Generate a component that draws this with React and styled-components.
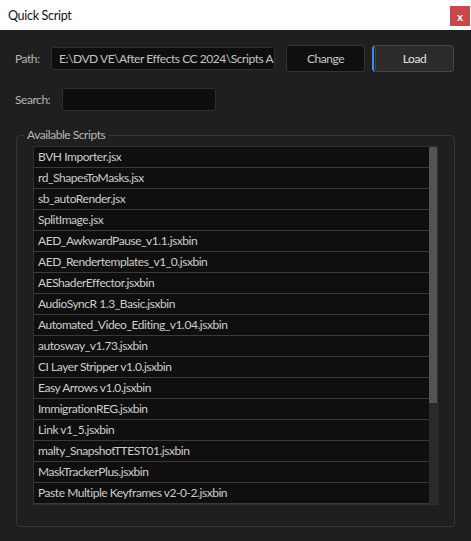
import React from "react";
import styled, { createGlobalStyle } from "styled-components";

const Global = createGlobalStyle`
  html, body { margin: 0; padding: 0; background: #1f1f1f; }
  body {
    font-family: Lato, "Noto Sans", sans-serif;
    font-size: 12px;
    letter-spacing: -0.45px;
  }
  * { box-sizing: border-box; }
`;

const Window = styled.div`
  width: 471px;
  height: 541px;
  display: flex;
  flex-direction: column;
  background: #1f1f1f;
  overflow: hidden;
`;

const TitleBar = styled.header`
  height: 30px;
  flex: none;
  background: #ffffff;
  display: flex;
  align-items: center;
  justify-content: space-between;
  padding: 0 1px 0 8px;
`;

const Title = styled.h1`
  margin: 0;
  font-size: 12.5px;
  font-weight: 400;
  letter-spacing: -0.3px;
  color: #111;
`;

const CloseButton = styled.button`
  width: 20px;
  height: 20px;
  margin-top: 2px;
  padding: 0;
  border: 0;
  background: #c9484b;
  color: #fff;
  font-family: inherit;
  font-size: 11px;
  font-weight: 700;
  line-height: 1;
`;

const Body = styled.main`
  flex: 1;
  min-height: 0;
  display: flex;
  flex-direction: column;
  padding: 15px 16px 14px 15px;
`;

const Row = styled.div`
  display: flex;
  align-items: center;
  height: ${(p) => p.$h}px;
  margin-top: ${(p) => p.$top || 0}px;
`;

const Label = styled.label`
  width: ${(p) => p.$w}px;
  flex: none;
  color: #b4b4b4;
`;

const Field = styled.div`
  width: ${(p) => p.$w}px;
  height: 23px;
  flex: none;
  background: #0e0e0e;
  border: 1px solid #2e2e2e;
  border-radius: 3px;
  padding: 0 7px;
  line-height: 21px;
  color: #c4c4c4;
  white-space: nowrap;
  overflow: hidden;
`;

const Button = styled.button`
  width: 79px;
  height: 27px;
  flex: none;
  padding: 0;
  border-radius: 3px;
  font-family: inherit;
  font-size: 12px;
  letter-spacing: inherit;
  border: 1px solid ${(p) => (p.$primary ? "#464646" : "#343434")};
  background: ${(p) => (p.$primary ? "#2b2b2b" : "#0f0f0f")};
  color: ${(p) => (p.$primary ? "#e2e2e2" : "#c8c8c8")};
`;

const FocusRing = styled.div`
  display: flex;
  height: 27px;
  margin-left: 7px;
  padding-left: 1px;
  border-left: 2px solid #3b8fe8;
  border-radius: 4px;
`;

const Group = styled.fieldset`
  flex: 1;
  min-height: 0;
  margin: 16px 0 0 1px;
  padding: 3px 16px 20px 16px;
  border: 1px solid #353535;
  border-radius: 4px;
  display: flex;
  flex-direction: column;
`;

const Legend = styled.legend`
  margin-left: -9px;
  padding: 0 3px;
  line-height: 16px;
  color: #b8b8b8;
`;

const List = styled.div`
  display: flex;
  border: 1px solid #303030;
  background: #0f0f0f;
`;

const Items = styled.ul`
  flex: 1;
  margin: 0;
  padding: 0;
  list-style: none;
`;

const Item = styled.li`
  height: 21px;
  padding-left: 4px;
  border-bottom: 1px solid #3a3a3a;
  line-height: 20px;
  color: #cdcdcd;
  white-space: nowrap;
`;

const Track = styled.div`
  width: 8px;
  flex: none;
  background: #2a2a2a;
`;

const Thumb = styled.div`
  height: ${(p) => p.$h}px;
  background: #545454;
  border-radius: 2px 2px 0 0;
`;

const scripts = [
  "BVH Importer.jsx",
  "rd_ShapesToMasks.jsx",
  "sb_autoRender.jsx",
  "SplitImage.jsx",
  "AED_AwkwardPause_v1.1.jsxbin",
  "AED_Rendertemplates_v1_0.jsxbin",
  "AEShaderEffector.jsxbin",
  "AudioSyncR 1.3_Basic.jsxbin",
  "Automated_Video_Editing_v1.04.jsxbin",
  "autosway_v1.73.jsxbin",
  "CI Layer Stripper v1.0.jsxbin",
  "Easy Arrows v1.0.jsxbin",
  "ImmigrationREG.jsxbin",
  "Link v1_5.jsxbin",
  "malty_SnapshotTTEST01.jsxbin",
  "MaskTrackerPlus.jsxbin",
  "Paste Multiple Keyframes v2-0-2.jsxbin",
];

export default function App() {
  return (
    <>
      <Global />
      <Window>
        <TitleBar>
          <Title>Quick Script</Title>
          <CloseButton>x</CloseButton>
        </TitleBar>
        <Body>
          <Row $h={27}>
            <Label $w={36}>Path:</Label>
            <Field $w={224}>E:\DVD VE\After Effects CC 2024\Scripts A</Field>
            <Button style={{ marginLeft: 11 }}>Change</Button>
            <FocusRing>
              <Button $primary>Load</Button>
            </FocusRing>
          </Row>
          <Row $h={23} $top={16}>
            <Label $w={47}>Search:</Label>
            <Field $w={154} />
          </Row>
          <Group>
            <Legend>Available Scripts</Legend>
            <List>
              <Items>
                {scripts.map((s) => (
                  <Item key={s}>{s}</Item>
                ))}
              </Items>
              <Track>
                <Thumb $h={256} />
              </Track>
            </List>
          </Group>
        </Body>
      </Window>
    </>
  );
}
